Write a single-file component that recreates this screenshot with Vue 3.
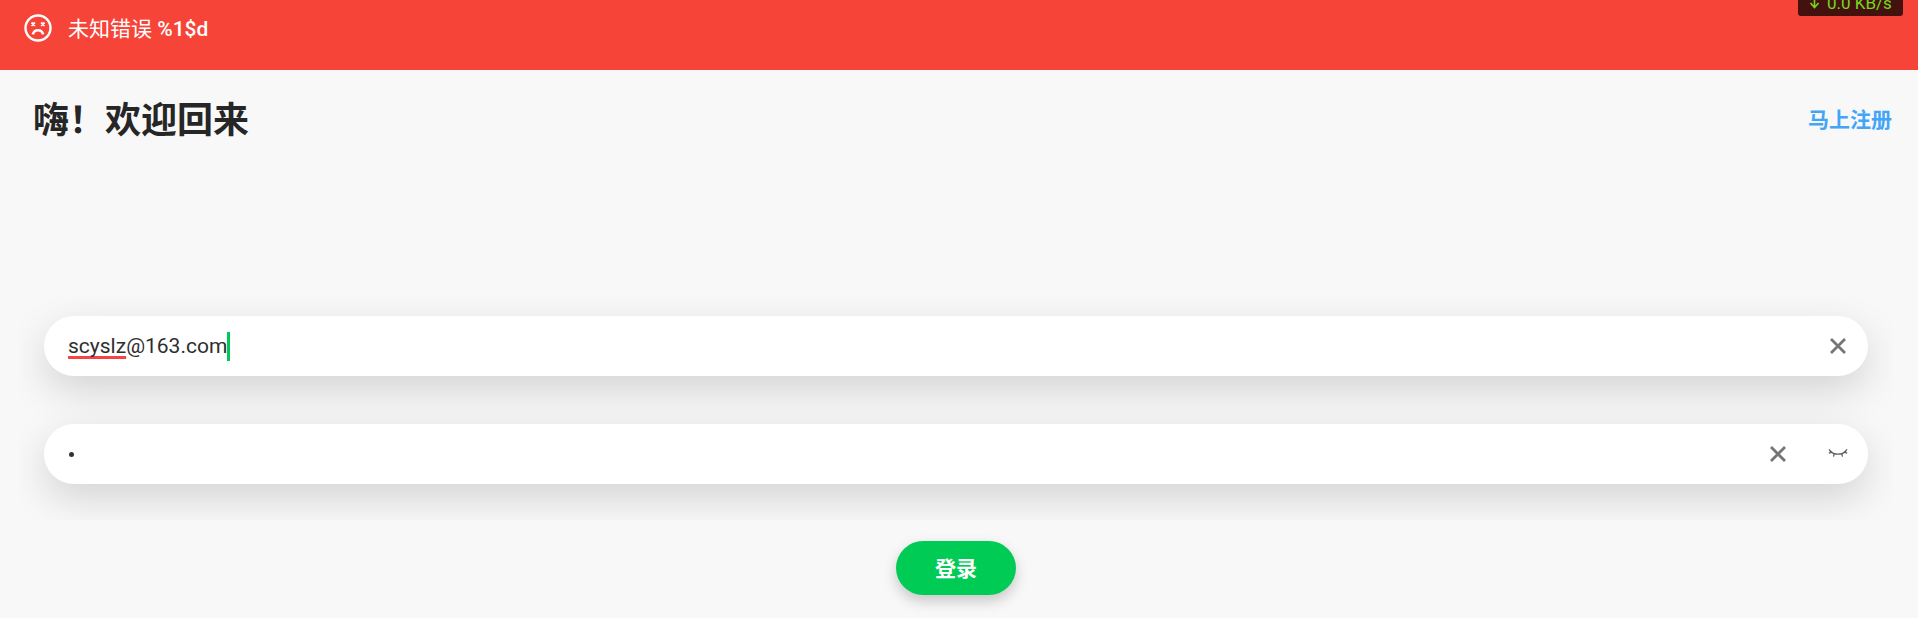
<script setup>
</script>

<template>
  <div class="page">
    <div class="error-bar">
      <svg class="sad" width="28" height="28" viewBox="0 0 28 28" fill="none" stroke="#fff">
        <circle cx="14" cy="14" r="12.5" stroke-width="2.4" />
        <path d="M7.500 8.500l3.400 3.400M10.900 8.500l-3.400 3.400M17.100 8.500l3.400 3.400M20.500 8.500l-3.400 3.400" stroke-width="1.800" />
        <path d="M8.800 20.400c.8-2.800 2.800-4.200 5.200-4.200s4.400 1.400 5.200 4.200" stroke-width="2.600" />
      </svg>
      <span class="error-text">未知错误 <span class="code">%1$d</span></span>
    </div>
    <div class="speed">
      <svg width="11" height="12" viewBox="0 0 11 12" fill="none" stroke="#76d81e" stroke-width="1.600">
        <path d="M5.500 0v10M1.500 6l4 4.500 4-4.500" />
      </svg>
      <span>0.0 KB/s</span>
    </div>

    <div class="title-row">
      <h1>嗨&#xFF01;欢迎回来</h1>
      <a class="signup">马上注册</a>
    </div>

    <div class="form">
      <div class="field">
        <div class="value">
          <span class="typo">scyslz</span>@163.com<span class="caret"></span>
        </div>
        <svg class="clear" width="16" height="16" viewBox="0 0 16 16" stroke="#757575" stroke-width="2.800" fill="none">
          <path d="M1 1l14 14M15 1L1 15" />
        </svg>
      </div>
      <div class="field">
        <div class="value"><span class="dot"></span></div>
        <svg class="clear" width="16" height="16" viewBox="0 0 16 16" stroke="#757575" stroke-width="2.800" fill="none">
          <path d="M1 1l14 14M15 1L1 15" />
        </svg>
        <svg class="eye" width="20" height="12" viewBox="0 0 20 12" stroke="#5f5f5f" stroke-width="1.300" fill="none">
          <path d="M2 3c2 2.200 4.500 3.200 8 3.200s6-1 8-3.200" />
          <path d="M1 1.300l2.800 3.400M.8 5.100l3.600-1M6.300 5.700l-.8 3M13.700 5.700l.8 3M19 1.300l-2.800 3.400M19.200 5.100l-3.600-1" />
        </svg>
      </div>
    </div>

    <div class="actions">
      <button class="login">登录</button>
    </div>
  </div>
</template>

<style scoped>
.page {
  position: relative;
  height: 618px;
  overflow: hidden;
  background: #f8f8f8;
  font-family: Roboto, "Noto Sans CJK SC", sans-serif;
}

.error-bar {
  display: flex;
  align-items: flex-start;
  height: 70px;
  padding: 14px 0 0 24px;
  box-sizing: border-box;
  background: #f64438;
  color: #fff;
}

.sad {
  flex: none;
}

.error-text {
  margin-left: 16px;
  font-size: 21px;
  line-height: 30px;
}

.code {
  font-weight: 500;
}

.speed {
  position: absolute;
  top: -10px;
  right: 15px;
  display: flex;
  align-items: center;
  gap: 7px;
  width: 105px;
  height: 26px;
  padding-left: 11px;
  box-sizing: border-box;
  border-radius: 3px;
  background: #43120f;
  color: #76d81e;
  font-size: 17px;
}

.title-row {
  display: flex;
  justify-content: space-between;
  align-items: center;
  height: 100px;
  padding: 0 26px 0 33px;
}

h1 {
  margin: 2px 0 0;
  font-size: 36px;
  font-weight: 700;
  color: #262626;
  line-height: 50px;
}

.signup {
  margin-bottom: 4px;
  font-size: 21px;
  font-weight: 700;
  color: #42a5f5;
}

.form {
  display: flex;
  flex-direction: column;
  gap: 48px;
  margin: 126px 26px 0 20px;
  padding: 20px 24px 36px;
  overflow: hidden;
}

.field {
  display: flex;
  align-items: center;
  height: 60px;
  padding: 0 22px 0 24px;
  border-radius: 30px;
  background: #fff;
  box-shadow: 0 14px 40px rgba(0, 0, 0, 0.15);
}

.value {
  flex: 1;
  display: flex;
  align-items: center;
  font-size: 21px;
  color: #2e2e2e;
}

.typo {
  text-decoration: underline;
  text-decoration-color: #f44444;
  text-decoration-thickness: 3px;
  text-decoration-skip-ink: none;
  text-underline-offset: 3px;
}

.caret {
  width: 3px;
  height: 29px;
  background: #00c853;
}

.dot {
  width: 5px;
  height: 5px;
  margin-left: 1px;
  border-radius: 50%;
  background: #333;
}

.eye {
  margin: 0 -2px 0 42px;
}

.actions {
  display: flex;
  justify-content: center;
  margin: 21px 26px 0 20px;
}

.login {
  width: 120px;
  height: 54px;
  padding: 0 0 3px;
  border: 0;
  border-radius: 27px;
  background: #00cc55;
  color: #fff;
  font: 700 21px Roboto, "Noto Sans CJK SC", sans-serif;
  box-shadow: 0 6px 14px rgba(0, 0, 0, 0.2);
}
</style>

<style>
body {
  margin: 0;
  background: #f8f8f8;
}
</style>
